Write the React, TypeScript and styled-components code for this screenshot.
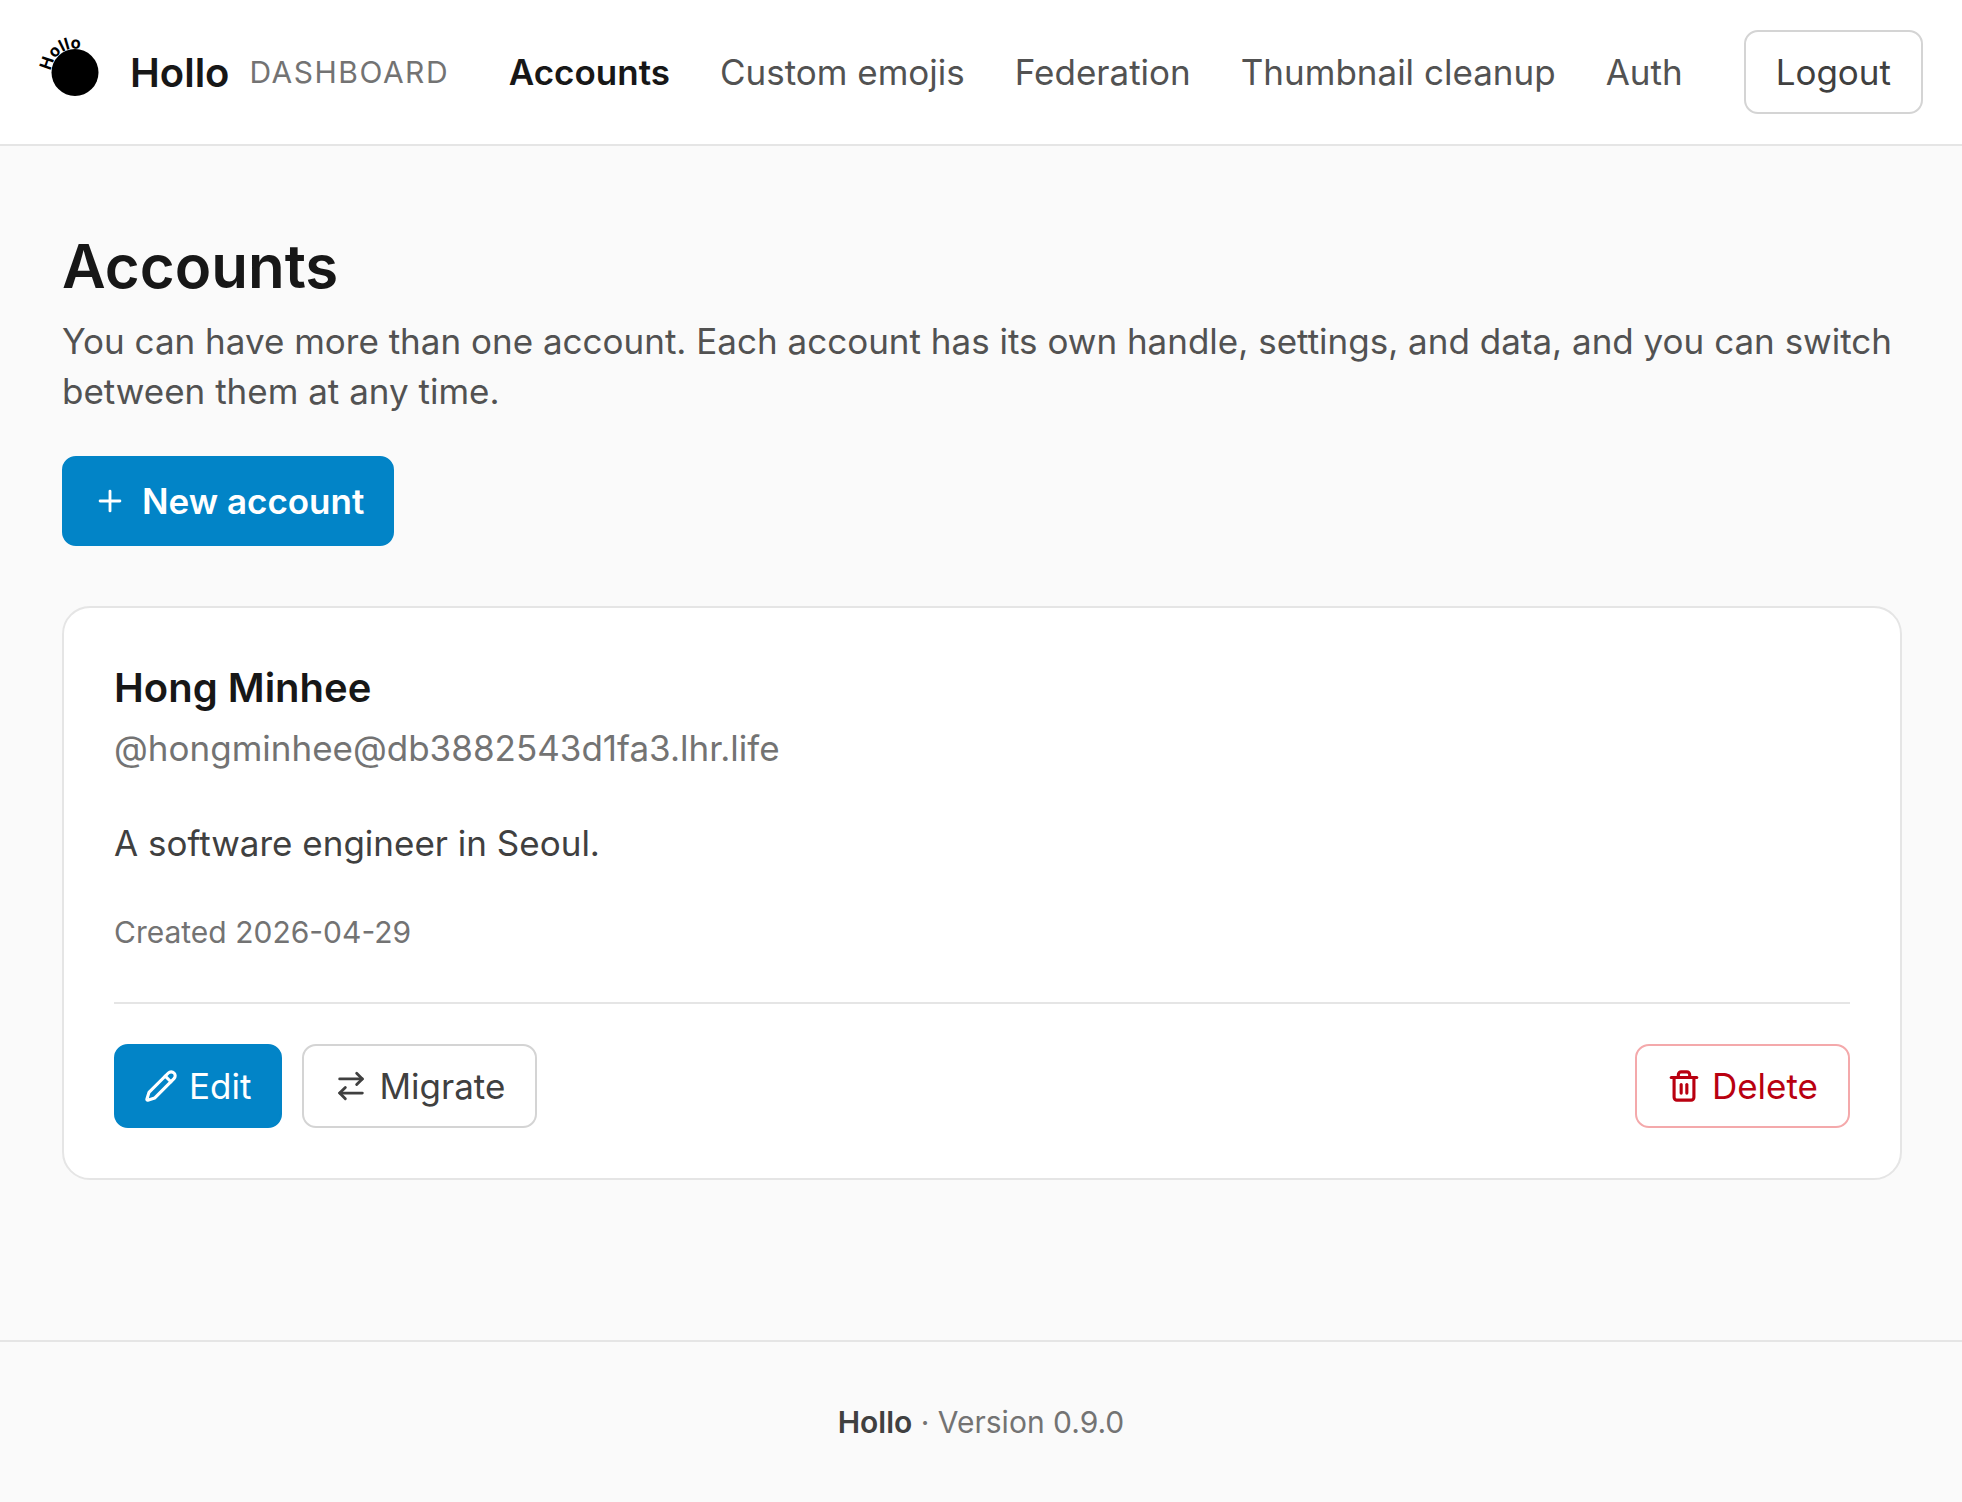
import { Plus, Pencil, ArrowRightLeft, Trash2 } from "lucide-react";
import styled, { createGlobalStyle } from "styled-components";

const GlobalStyle = createGlobalStyle`
  html, body {
    margin: 0;
    padding: 0;
    background: #fafafa;
    font-family: Inter, "Noto Sans", sans-serif;
    color: #171717;
  }
  * {
    box-sizing: border-box;
  }
`;

const Page = styled.div`
  min-height: 1502px;
  display: flex;
  flex-direction: column;
`;

const Header = styled.header`
  height: 146px;
  display: flex;
  align-items: center;
  justify-content: space-between;
  padding: 0 39px 0 40px;
  background: #ffffff;
  border-bottom: 2px solid #e5e5e5;
`;

const Brand = styled.div`
  display: flex;
  align-items: center;
`;

const LogoMark = styled.svg`
  width: 72px;
  height: 72px;
  margin-right: 18px;
  overflow: visible;
`;

const BrandName = styled.span`
  font-size: 40px;
  font-weight: 600;
  margin-right: 20px;
`;

const BrandTag = styled.span`
  font-size: 30px;
  letter-spacing: 1.5px;
  color: #737373;
`;

const Nav = styled.nav`
  display: flex;
  align-items: center;
  gap: 50px;
`;

const NavLink = styled.a<{ $active?: boolean }>`
  font-size: 35px;
  font-weight: ${({ $active }) => ($active ? 600 : 400)};
  color: ${({ $active }) => ($active ? "#171717" : "#525252")};
`;

const Button = styled.button<{ $variant: "primary" | "outline" | "danger" }>`
  display: inline-flex;
  align-items: center;
  height: 84px;
  padding: 0 30px 0 31px;
  gap: 12px;
  font-family: inherit;
  font-size: 35px;
  border-radius: 14px;
  border: 2px solid
    ${({ $variant }) =>
      $variant === "primary"
        ? "#0284c7"
        : $variant === "danger"
          ? "#f4a9ab"
          : "#d4d4d4"};
  background: ${({ $variant }) =>
    $variant === "primary" ? "#0284c7" : "#ffffff"};
  color: ${({ $variant }) =>
    $variant === "primary"
      ? "#ffffff"
      : $variant === "danger"
        ? "#b90010"
        : "#404040"};

  svg {
    margin: 0 -1px;
  }
`;

const LogoutButton = styled(Button)`
  margin-left: 11px;
  padding: 0 30px;
`;

const NewButton = styled(Button)`
  height: 90px;
  padding: 0 28px 0 30px;
  gap: 16px;
  font-weight: 600;
  margin-bottom: 60px;
`;

const EditButton = styled(Button)`
  padding: 0 29px;
`;

const Main = styled.main`
  flex: 1;
  padding: 84px 60px 0 62px;
  display: flex;
  flex-direction: column;
  align-items: flex-start;
`;

const Title = styled.h1`
  margin: 0 0 14px;
  font-size: 60px;
  line-height: 72px;
  font-weight: 600;
`;

const Lead = styled.p`
  margin: 0 0 40px;
  font-size: 35px;
  line-height: 50px;
  color: #525252;
`;

const Card = styled.section`
  width: 100%;
  padding: 50px;
  background: #ffffff;
  border: 2px solid #e5e5e5;
  border-radius: 28px;
`;

const Name = styled.h2`
  margin: 0;
  font-size: 40px;
  line-height: 60px;
  font-weight: 600;
`;

const Handle = styled.p`
  margin: 0 0 40px;
  font-size: 35px;
  line-height: 60px;
  color: #737373;
`;

const Bio = styled.p`
  margin: 0 0 44px;
  font-size: 35px;
  line-height: 50px;
  color: #404040;
`;

const Created = styled.p`
  margin: 0 0 50px;
  font-size: 30px;
  line-height: 40px;
  color: #737373;
`;

const Actions = styled.div`
  display: flex;
  align-items: center;
  gap: 20px;
  padding-top: 40px;
  border-top: 2px solid #e5e5e5;
`;

const Spacer = styled.div`
  flex: 1;
`;

const Footer = styled.footer`
  height: 162px;
  display: flex;
  align-items: center;
  justify-content: center;
  border-top: 2px solid #e5e5e5;
  font-size: 30px;
  color: #737373;
`;

const FooterName = styled.strong`
  font-weight: 600;
  color: #404040;
`;

export default function App() {
  return (
    <Page>
      <GlobalStyle />
      <Header>
        <Brand>
          <LogoMark viewBox="0 0 72 72">
            <circle cx="35" cy="36.5" r="23.5" fill="#000" />
            <path id="logo-arc" d="M 11.06 34.83 A 24 24 0 0 1 50.4 18.1" fill="none" />
            <text fontFamily="Inter" fontSize="16.5" fontWeight="700" fill="#000">
              <textPath href="#logo-arc">Hollo</textPath>
            </text>
          </LogoMark>
          <BrandName>Hollo</BrandName>
          <BrandTag>DASHBOARD</BrandTag>
        </Brand>
        <Nav>
          <NavLink $active>Accounts</NavLink>
          <NavLink>Custom emojis</NavLink>
          <NavLink>Federation</NavLink>
          <NavLink>Thumbnail cleanup</NavLink>
          <NavLink>Auth</NavLink>
          <LogoutButton $variant="outline">Logout</LogoutButton>
        </Nav>
      </Header>
      <Main>
        <Title>Accounts</Title>
        <Lead>
          You can have more than one account. Each account has its own handle,
          settings, and data, and you can switch between them at any time.
        </Lead>
        <NewButton $variant="primary">
          <Plus size={34} strokeWidth={2} />
          New account
        </NewButton>
        <Card>
          <Name>Hong Minhee</Name>
          <Handle>@hongminhee@db3882543d1fa3.lhr.life</Handle>
          <Bio>A software engineer in Seoul.</Bio>
          <Created>Created 2026-04-29</Created>
          <Actions>
            <EditButton $variant="primary">
              <Pencil size={34} strokeWidth={2.2} />
              Edit
            </EditButton>
            <Button $variant="outline">
              <ArrowRightLeft size={34} />
              Migrate
            </Button>
            <Spacer />
            <Button $variant="danger">
              <Trash2 size={34} strokeWidth={2.2} />
              Delete
            </Button>
          </Actions>
        </Card>
      </Main>
      <Footer>
        <FooterName>Hollo</FooterName>&nbsp;· Version 0.9.0
      </Footer>
    </Page>
  );
}
